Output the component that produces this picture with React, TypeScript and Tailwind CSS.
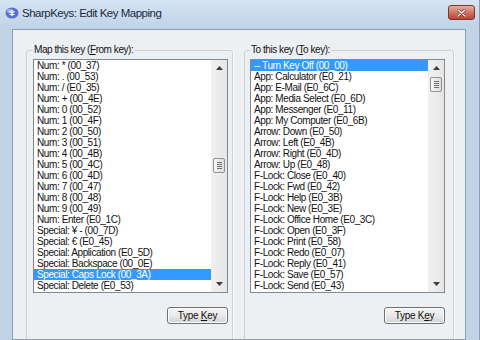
import * as React from "react";

const fromKeys = [
  "Num: * (00_37)",
  "Num: . (00_53)",
  "Num: / (E0_35)",
  "Num: + (00_4E)",
  "Num: 0 (00_52)",
  "Num: 1 (00_4F)",
  "Num: 2 (00_50)",
  "Num: 3 (00_51)",
  "Num: 4 (00_4B)",
  "Num: 5 (00_4C)",
  "Num: 6 (00_4D)",
  "Num: 7 (00_47)",
  "Num: 8 (00_48)",
  "Num: 9 (00_49)",
  "Num: Enter (E0_1C)",
  "Special: ¥ - (00_7D)",
  "Special: € (E0_45)",
  "Special: Application (E0_5D)",
  "Special: Backspace (00_0E)",
  "Special: Caps Lock (00_3A)",
  "Special: Delete (E0_53)",
];

const toKeys = [
  "-- Turn Key Off (00_00)",
  "App: Calculator (E0_21)",
  "App: E-Mail (E0_6C)",
  "App: Media Select (E0_6D)",
  "App: Messenger (E0_11)",
  "App: My Computer (E0_6B)",
  "Arrow: Down (E0_50)",
  "Arrow: Left (E0_4B)",
  "Arrow: Right (E0_4D)",
  "Arrow: Up (E0_48)",
  "F-Lock: Close (E0_40)",
  "F-Lock: Fwd (E0_42)",
  "F-Lock: Help (E0_3B)",
  "F-Lock: New (E0_3E)",
  "F-Lock: Office Home (E0_3C)",
  "F-Lock: Open (E0_3F)",
  "F-Lock: Print (E0_58)",
  "F-Lock: Redo (E0_07)",
  "F-Lock: Reply (E0_41)",
  "F-Lock: Save (E0_57)",
  "F-Lock: Send (E0_43)",
];

function Arrow({ down }: { down?: boolean }) {
  return (
    <div className="flex h-[16px] items-center justify-center">
      <svg width="7" height="4" viewBox="0 0 7 4">
        <path d={down ? "M0 0 L7 0 L3.5 4Z" : "M0 4 L3.5 0 L7 4Z"} fill="#3a3a3a" />
      </svg>
    </div>
  );
}

function ScrollBar({ thumbClass }: { thumbClass: string }) {
  return (
    <div className="flex w-[16px] flex-col bg-gradient-to-r from-[#f0f0f0] to-[#e6e6e6]">
      <Arrow />
      <div className="flex-1">
        <div
          className={`mx-auto flex h-[15px] w-[12px] flex-col items-center justify-center gap-[1px] rounded-[2px] border border-[#929292] bg-gradient-to-r from-[#f6f6f6] to-[#dcdcdc] ${thumbClass}`}
        >
          <div className="h-[1px] w-[5px] bg-[#707070]" />
          <div className="h-[1px] w-[5px] bg-[#707070]" />
          <div className="h-[1px] w-[5px] bg-[#707070]" />
          <div className="h-[1px] w-[5px] bg-[#707070]" />
        </div>
      </div>
      <Arrow down />
    </div>
  );
}

function ListBox({
  items,
  selected,
  thumbClass,
}: {
  items: string[];
  selected: number;
  thumbClass: string;
}) {
  return (
    <div className="flex h-[234px] w-[195px] border border-[#828790] bg-white">
      <div className="flex-1 overflow-hidden">
        {items.map((item, i) => (
          <div
            key={item}
            className={`h-[11px] whitespace-nowrap pl-[3px] text-[10px] leading-[11px] tracking-[-0.4px] ${
              i === selected ? "bg-[#3399ff] text-white" : "text-[#111111]"
            }`}
          >
            {item}
          </div>
        ))}
      </div>
      <ScrollBar thumbClass={thumbClass} />
    </div>
  );
}

function TypeKeyButton({ children }: { children: React.ReactNode }) {
  return (
    <button className="h-[17px] w-[61px] rounded-[3px] border border-[#707070] bg-gradient-to-b from-[#f4f4f4] via-[#e9e9e9] to-[#d3d3d3] text-[10px] leading-[15px] tracking-[-0.3px] text-[#111111] shadow-[inset_0_0_0_1px_#fcfcfc]">
      {children}
    </button>
  );
}

export default function App() {
  return (
    <div className="flex h-[340px] w-[480px] flex-col overflow-hidden border-r border-[#8a9cb0] bg-[#c2d3e6] font-['Liberation_Sans',Arial,sans-serif]">
      {/* Title bar */}
      <div className="flex h-[29px] shrink-0 items-start bg-gradient-to-b from-[#d6e4f2] to-[#bfd2e7] pl-[5px] pr-[4px]">
        <svg width="14" height="12" viewBox="0 0 14 12" className="mt-[7px]">
          <ellipse cx="7" cy="6" rx="6.5" ry="5.5" fill="#5a6fd0" />
          <ellipse cx="5" cy="4" rx="3" ry="2" fill="#a9b6f0" />
          <path d="M7 3 L7 9 M4.5 4.5 L9.5 7.5 M9.5 4.5 L4.5 7.5" stroke="#ffffff" strokeWidth="1.3" />
        </svg>
        <span className="ml-[3px] mt-[6px] text-[11.5px] leading-[14px] tracking-[-0.5px] text-[#1c2a3a]">
          SharpKeys: Edit Key Mapping
        </span>
        <div className="ml-auto mt-[5px] flex h-[15px] w-[27px] items-center justify-center rounded-[3px] border border-[#7a3530] bg-gradient-to-b from-[#e6ac9f] via-[#d37563] to-[#c0402f]">
          <svg width="9" height="8" viewBox="0 0 9 8">
            <path d="M1 1 L8 7 M8 1 L1 7" stroke="#5a1a14" strokeWidth="2.6" strokeLinecap="round" />
            <path d="M1 1 L8 7 M8 1 L1 7" stroke="#ffffff" strokeWidth="1.6" strokeLinecap="round" />
          </svg>
        </div>
      </div>

      {/* Client area */}
      <div className="ml-[12px] mr-[13px] flex min-h-0 flex-1 gap-[11px] overflow-hidden border border-[#8d9fb2] bg-[#edf0f3] pl-[13px] pt-[14px]">
        <fieldset className="h-[310px] w-[207px] shrink-0 rounded-[3px] border border-[#c9d1d8] pl-[6px] pt-[3px] shadow-[1px_1px_0_#ffffff]">
          <legend className="px-[1px] text-[10px] leading-[12px] tracking-[-0.45px] text-[#111111]">
            Map this key (<span className="underline">F</span>rom key):
          </legend>
          <ListBox items={fromKeys} selected={19} thumbClass="mt-[82px]" />
          <div className="mt-[14px] flex w-[195px] justify-end">
            <TypeKeyButton>
              Type <span className="underline">K</span>ey
            </TypeKeyButton>
          </div>
        </fieldset>

        <fieldset className="h-[310px] w-[210px] shrink-0 rounded-[3px] border border-[#c9d1d8] pl-[5px] pt-[3px] shadow-[1px_1px_0_#ffffff]">
          <legend className="px-[1px] text-[10px] leading-[12px] tracking-[-0.45px] text-[#111111]">
            To this key (<span className="underline">T</span>o key):
          </legend>
          <ListBox items={toKeys} selected={0} thumbClass="mt-[1px]" />
          <div className="mt-[14px] flex w-[195px] justify-end">
            <TypeKeyButton>
              Type K<span className="underline">e</span>y
            </TypeKeyButton>
          </div>
        </fieldset>
      </div>
    </div>
  );
}
